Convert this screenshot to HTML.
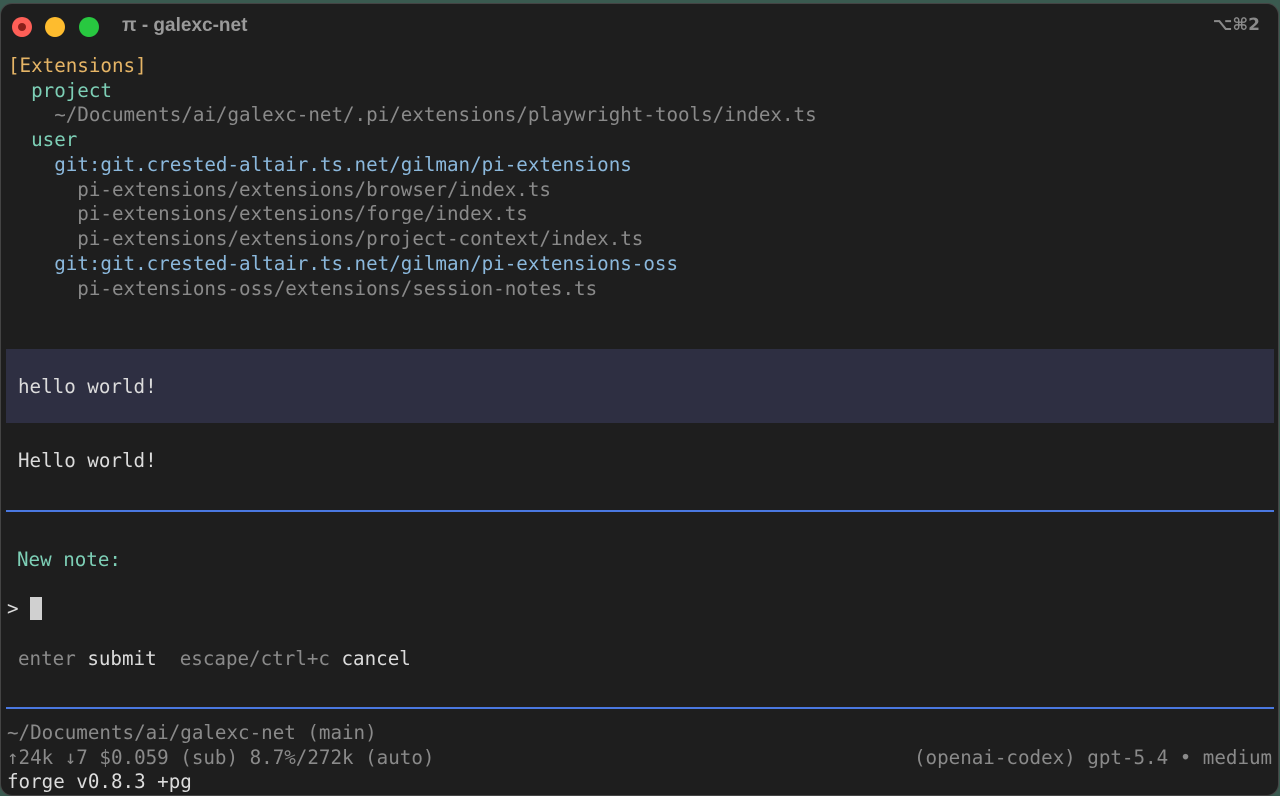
<!DOCTYPE html>
<html><head><meta charset="utf-8"><style>
html,body{margin:0;padding:0;width:1280px;height:796px;overflow:hidden;background:#3a5a50;}
.win{position:absolute;left:0;top:3px;width:1279px;height:793px;background:#1e1e1e;border-radius:12px;border:1px solid #444;box-sizing:border-box;overflow:hidden;}
.t{position:absolute;font-family:"DejaVu Sans Mono","Liberation Mono",monospace;font-size:19.2px;line-height:24px;white-space:pre;color:#d4d4d4;}
.dot{position:absolute;top:13px;width:20px;height:20px;border-radius:50%;}
.title{position:absolute;left:121px;top:11px;font-family:"Liberation Sans",sans-serif;font-weight:bold;font-size:19px;color:#9a9a9a;}
.kb{position:absolute;right:18px;top:11px;font-family:"DejaVu Sans","Liberation Sans",sans-serif;font-weight:bold;font-size:17px;color:#8a8a8a;}
.o{color:#e6b566}.g{color:#7dcfb6}.b{color:#8bb8dc}.d{color:#8a8a8a}.w{color:#dcdcdc}
.hl{position:absolute;left:5px;top:345px;width:1268px;height:74px;background:#2e2f42;}
.bl{position:absolute;left:5px;width:1268px;height:2px;background:#4a78e0;}
</style></head><body>
<div class="win">
<div class="dot" style="left:11px;background:#fe5f57"><div style="position:absolute;left:6px;top:6px;width:8px;height:8px;border-radius:50%;background:#8a1f1a"></div></div>
<div class="dot" style="left:44px;background:#febc2e"></div>
<div class="dot" style="left:78px;background:#28c840"></div>
<div class="title">π - galexc-net</div>
<div class="kb">⌥⌘2</div>

<div class="t o" style="left:7px;top:50px">[Extensions]</div>
<div class="t g" style="left:7px;top:75px">  project</div>
<div class="t d" style="left:7px;top:99px">    ~/Documents/ai/galexc-net/.pi/extensions/playwright-tools/index.ts</div>
<div class="t g" style="left:7px;top:124px">  user</div>
<div class="t b" style="left:7px;top:149px">    git:git.crested-altair.ts.net/gilman/pi-extensions</div>
<div class="t d" style="left:7px;top:174px">      pi-extensions/extensions/browser/index.ts</div>
<div class="t d" style="left:7px;top:198px">      pi-extensions/extensions/forge/index.ts</div>
<div class="t d" style="left:7px;top:223px">      pi-extensions/extensions/project-context/index.ts</div>
<div class="t b" style="left:7px;top:248px">    git:git.crested-altair.ts.net/gilman/pi-extensions-oss</div>
<div class="t d" style="left:7px;top:273px">      pi-extensions-oss/extensions/session-notes.ts</div>

<div class="hl"></div>
<div class="t w" style="left:17px;top:371px">hello world!</div>
<div class="t w" style="left:17px;top:445px">Hello world!</div>
<div class="bl" style="top:506px"></div>
<div class="t g" style="left:16px;top:544px">New note:</div>
<div class="t w" style="left:6px;top:593px">&gt;</div>
<div style="position:absolute;left:29px;top:593px;width:12px;height:23px;background:#d0d0d0"></div>
<div class="t" style="left:17px;top:643px"><span class="d">enter</span> <span class="w">submit</span>  <span class="d">escape/ctrl+c</span> <span class="w">cancel</span></div>
<div class="bl" style="top:703px"></div>
<div class="t d" style="left:6px;top:717px">~/Documents/ai/galexc-net (main)</div>
<div class="t d" style="left:6px;top:742px">↑24k ↓7 $0.059 (sub) 8.7%/272k (auto)</div>
<div class="t d" style="left:913px;top:742px">(openai-codex) gpt-5.4 • medium</div>
<div class="t w" style="left:6px;top:766px">forge v0.8.3 +pg</div>
</div>
</body></html>
